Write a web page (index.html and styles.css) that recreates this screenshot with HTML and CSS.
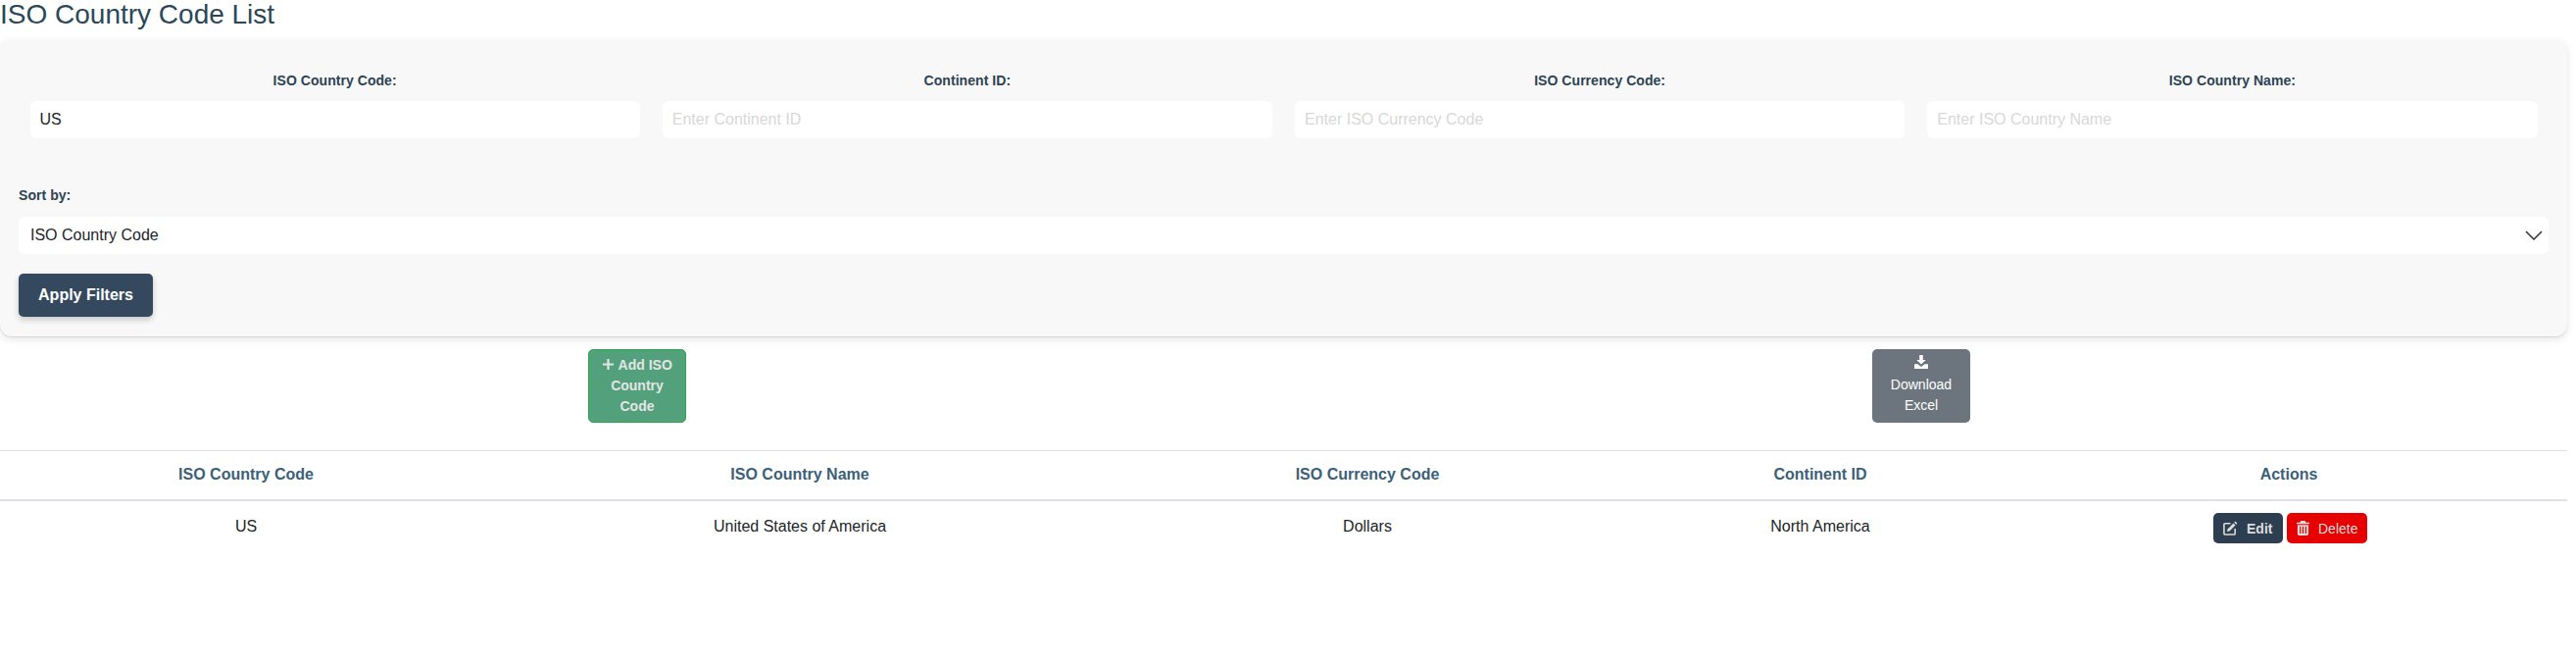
FILE: index.html
```html
<!DOCTYPE html>
<html lang="en">
<head>
<meta charset="utf-8">
<title>ISO Country Code List</title>
<link rel="stylesheet" href="styles.css">
</head>
<body>
<h1 class="title">ISO Country Code List</h1>
<form class="filters">
  <div class="filter-grid">
    <div class="field"><label>ISO Country Code:</label><input class="text-input" value="US"></div>
    <div class="field"><label>Continent ID:</label><input class="text-input" placeholder="Enter Continent ID"></div>
    <div class="field"><label>ISO Currency Code:</label><input class="text-input" placeholder="Enter ISO Currency Code"></div>
    <div class="field"><label>ISO Country Name:</label><input class="text-input" placeholder="Enter ISO Country Name"></div>
  </div>
  <div class="sort">
    <label>Sort by:</label>
    <div class="select">
      <span>ISO Country Code</span>
      <svg class="chevron" viewBox="0 0 18 10"><path d="M1 1l8 8 8-8" fill="none" stroke="#333" stroke-width="1.5"/></svg>
    </div>
  </div>
  <button type="button" class="apply">Apply Filters</button>
</form>
<div class="toolbar">
  <a class="tool tool-add"><svg class="ic-plus" viewBox="0 0 14 14"><path d="M7 1v12M1 7h12" stroke="currentColor" stroke-width="2.4" fill="none"/></svg> Add ISO Country Code</a>
  <a class="tool tool-download"><svg class="ic-down" viewBox="0 0 14 14"><path fill="currentColor" d="M5.2 0h3.6v5h2.9L7 9.6 2.3 5h2.9zM0 9.2h3.4L7 12l3.6-2.8H14V14H0z"/></svg><br>Download Excel</a>
</div>
<table class="grid">
  <colgroup><col class="c1"><col class="c2"><col class="c3"><col class="c4"><col class="c5"></colgroup>
  <thead>
    <tr><th>ISO Country Code</th><th>ISO Country Name</th><th>ISO Currency Code</th><th>Continent ID</th><th>Actions</th></tr>
  </thead>
  <tbody>
    <tr>
      <td>US</td><td>United States of America</td><td>Dollars</td><td>North America</td>
      <td><div class="actions">
        <a class="act act-edit"><svg class="ic ic-edit" viewBox="0 0 16 16"><path fill="none" stroke="currentColor" stroke-width="1.7" d="M8 3H2.2C1.5 3 1 3.5 1 4.2v9.6c0 .7.5 1.2 1.2 1.2h9.6c.7 0 1.2-.5 1.2-1.2V8.5"/><path fill="currentColor" d="M13.2.6l2.2 2.2-1.2 1.2L12 1.8zM11.2 2.6l2.2 2.2-6.4 6.4-2.8.6.6-2.8z"/></svg>Edit</a>
        <a class="act act-delete"><svg class="ic ic-trash" viewBox="0 0 14 16"><path fill="currentColor" d="M4.6 0h4.8l.9 1.8H14v1.6H0V1.8h3.7zM1 4.4h12V14.4c0 .9-.7 1.6-1.6 1.6H2.6C1.7 16 1 15.3 1 14.4zM3.4 6v8h1.3V6zm3 0v8h1.3V6zm3 0v8h1.3V6z"/></svg>Delete</a>
      </div></td>
    </tr>
  </tbody>
</table>
</body>
</html>
```
FILE: styles.css
```css
* { box-sizing: border-box; }
html, body { margin: 0; padding: 0; background: #fff; }
body { width: 2628px; height: 676px; overflow: hidden; font-family: "Liberation Sans", Arial, sans-serif; color: #212529; font-size: 16px; }
.title { margin: 0; height: 40px; font-size: 28px; line-height: 30px; font-weight: 400; color: #2a4858; }
.filters { width: 2619px; height: 303px; padding: 32px 19px 0; background: #f8f8f8; border-radius: 12px; box-shadow: 0 1px 1px rgba(0,0,0,.1), 0 3px 8px rgba(0,0,0,.1); }
.filter-grid { display: grid; grid-template-columns: repeat(4, 1fr); }
.field { display: flex; flex-direction: column; align-items: center; padding: 0 11.5px; }
label { font-size: 14px; line-height: 20px; font-weight: 700; color: #2c4354; letter-spacing: .05px; }
.field label { margin-bottom: 11px; height: 20px; }
.text-input { width: 100%; height: 38px; padding: 0 10px; border: 0; border-radius: 6px; background: #fff; font: 16px "Liberation Sans", Arial, sans-serif; color: #212529; outline: 0; }
.text-input::placeholder { color: #d8d8d8; opacity: 1; }
.sort { margin-top: 48px; display: flex; flex-direction: column; align-items: flex-start; }
.sort label { margin-bottom: 12px; }
.select { width: 100%; height: 38px; padding: 0 12px; display: flex; align-items: center; justify-content: space-between; background: #fff; border-radius: 6px; }
.chevron { width: 18px; height: 10px; margin-right: -6px; }
.apply { display: block; width: 137px; height: 44px; margin-top: 20px; border: 0; border-radius: 5px; background: #34495e; color: #fff; font: 700 16px "Liberation Sans", Arial, sans-serif; box-shadow: 0 3px 6px rgba(0,0,0,.2); }
.toolbar { width: 2620px; margin: 13px 0 28px -5px; display: flex; justify-content: space-around; align-items: flex-start; }
.tool { display: block; width: 100px; height: 75px; padding: 5px 8px 0; border-radius: 5px; text-align: center; font-size: 14px; line-height: 21px; }
.tool-add { background: #52a07c; border: 1px solid #28a745; color: #e4e4e4; font-weight: 700; }
.tool-download { background: #6c757d; color: #fff; }
.ic-plus { width: 13px; height: 13px; vertical-align: -1px; }
.ic-down { width: 14px; height: 14px; vertical-align: 0; }
.grid { width: 2619px; table-layout: fixed; border-collapse: collapse; }
.c1 { width: 502px; } .c2 { width: 628px; } .c3 { width: 530px; } .c4 { width: 394px; } .c5 { width: 565px; }
th { height: 50px; padding: 0; border-top: 1px solid #dee2e6; border-bottom: 2px solid #dee2e6; font-size: 16px; font-weight: 700; color: #3b6078; text-align: center; }
td { height: 54px; padding: 0; font-size: 16px; text-align: center; }
th:last-child, td:last-child { padding-right: 3px; }
.actions { display: flex; justify-content: center; gap: 4px; padding: 3px 0 0 3px; }
.act { display: inline-flex; align-items: center; height: 31px; border-radius: 5px; font-size: 14px; font-weight: 700; color: #dcdcdc; }
.act-edit { width: 71px; padding-left: 10px; background: #2c3e50; }
.act-delete { width: 82px; padding-left: 10px; background: #e60000; font-weight: 400; }
.ic { height: 15px; margin-right: 9px; }
.ic-edit { width: 15px; }
.ic-trash { width: 13px; margin-right: 9px; }
```
